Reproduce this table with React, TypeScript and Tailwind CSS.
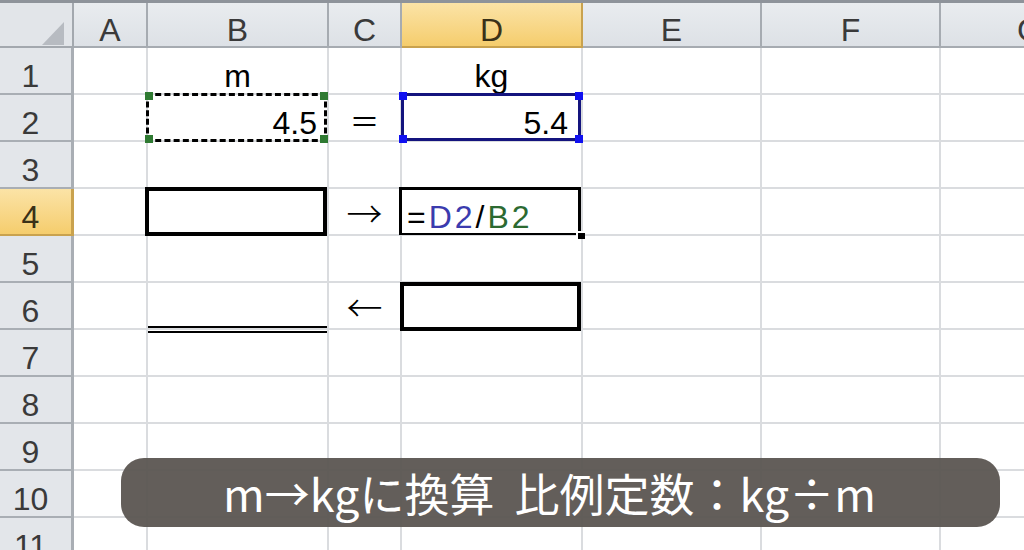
import React from 'react';

const cols = ['A', 'B', 'C', 'D', 'E', 'F', 'G'];
const rows = [1, 2, 3, 4, 5, 6, 7, 8, 9, 10, 11];

const cellFont = { fontFamily: '"Liberation Sans", "Noto Sans CJK JP", sans-serif' };
const jpFont = { fontFamily: '"Noto Sans CJK JP", "Liberation Sans", sans-serif' };

function Corner() {
  return (
    <div className="relative h-[45px] bg-[#e2e5e9] border-r-2 border-b-2 border-[#a3a8ae]">
      <svg className="absolute left-[42px] top-[19px]" width="22" height="23" viewBox="0 0 22 23">
        <polygon points="22,0 22,23 0,23" fill="#b7bbc1" />
      </svg>
    </div>
  );
}

function ColHeader({ label }: { label: string }) {
  const active = label === 'D';
  return (
    <div
      className={`h-[45px] flex items-end justify-center border-r-2 border-b-2 text-[32px] leading-none ${
        active
          ? 'bg-gradient-to-b from-[#fbe3a6] to-[#f5cd6c] border-[#c9a24e] text-[#3a3118]'
          : 'bg-gradient-to-b from-[#e9ecef] to-[#dde1e6] border-[#a6abb1] text-[#3a3a3a]'
      }`}
      style={cellFont}
    >
      {label}
    </div>
  );
}

function RowHeader({ n }: { n: number }) {
  const active = n === 4;
  return (
    <div
      className={`h-[47px] flex items-end justify-center pr-[10px] pb-[1px] border-r-[3px] border-b-2 text-[32px] leading-none ${
        active
          ? 'bg-gradient-to-b from-[#fbe3a6] to-[#f5cd6c] border-[#c9a24e] text-[#3a3118]'
          : 'bg-[#e3e6ea] border-[#a9aeb4] text-[#3a3a3a]'
      }`}
      style={cellFont}
    >
      {n}
    </div>
  );
}

function Handle({ pos, color }: { pos: string; color: string }) {
  return <div className={`absolute w-[8px] h-[8px] ${pos} ${color}`} />;
}

function Cell({ r, c }: { r: number; c: string }) {
  let content: React.ReactNode = null;
  let align = 'justify-start';
  let overlay: React.ReactNode = null;

  if (r === 1 && c === 'B') {
    content = 'm';
    align = 'justify-center';
  }
  if (r === 1 && c === 'D') {
    content = 'kg';
    align = 'justify-center';
  }
  if (r === 2 && c === 'B') {
    content = '4.5';
    align = 'justify-end pr-[10px]';
    overlay = (
      <div className="absolute z-10 -top-[2px] -left-[2px] right-0 -bottom-[2px]">
        <div className="absolute inset-0 border-[3px] border-dashed border-black" />
        <Handle pos="-top-[1px] -left-[1px]" color="bg-[#2f7a32]" />
        <Handle pos="-top-[1px] -right-[1px]" color="bg-[#2f7a32]" />
        <Handle pos="-bottom-[1px] -left-[1px]" color="bg-[#2f7a32]" />
        <Handle pos="-bottom-[1px] -right-[1px]" color="bg-[#2f7a32]" />
      </div>
    );
  }
  if (r === 2 && c === 'C') {
    content = (
      <span className="text-[30px] pb-[4px]" style={jpFont}>
        ＝
      </span>
    );
    align = 'justify-center';
  }
  if (r === 2 && c === 'D') {
    content = '5.4';
    align = 'justify-end pr-[13px]';
    overlay = (
      <div className="absolute z-10 -top-[2px] -left-[1px] right-0 -bottom-[1px]">
        <div className="absolute inset-0 border-[3px] border-[#14147e]" />
        <Handle pos="-top-[1px] -left-[2px]" color="bg-[#1010f0]" />
        <Handle pos="-top-[1px] -right-[2px]" color="bg-[#1010f0]" />
        <Handle pos="-bottom-[2px] -left-[2px]" color="bg-[#1010f0]" />
        <Handle pos="-bottom-[2px] -right-[2px]" color="bg-[#1010f0]" />
      </div>
    );
  }
  if (r === 4 && c === 'B') {
    overlay = <div className="absolute z-10 -top-[2px] -left-[3px] right-0 -bottom-[2px] border-4 border-black" />;
  }
  if (r === 4 && c === 'C') {
    content = (
      <span className="text-[36px] font-light pb-[3px]" style={jpFont}>
        →
      </span>
    );
    align = 'justify-center';
  }
  if (r === 4 && c === 'D') {
    content = (
      <span className="tracking-[3px]">
        <span>=</span>
        <span className="text-[#3b3bae]">D2</span>
        <span>/</span>
        <span className="text-[#2c6a31]">B2</span>
      </span>
    );
    align = 'justify-start pl-[5px] text-[30px]';
    overlay = (
      <div className="absolute z-10 -top-[2px] -left-[3px] right-0 -bottom-[1px]">
        <div className="absolute inset-0 border-x-[3px] border-t-[3px] border-b-2 border-black" />
        <div className="absolute -right-[4px] -bottom-[4px] w-[9px] h-[8px] bg-black border-l-2 border-t-2 border-white" />
      </div>
    );
  }
  if (r === 6 && c === 'B') {
    overlay = <div className="absolute z-10 left-0 right-0 -bottom-[5px] h-[7px] border-y-2 border-black" />;
  }
  if (r === 6 && c === 'C') {
    content = (
      <span className="text-[36px] font-light pb-[3px]" style={jpFont}>
        ←
      </span>
    );
    align = 'justify-center';
  }
  if (r === 6 && c === 'D') {
    overlay = <div className="absolute z-10 -top-[1px] -left-[2px] right-0 -bottom-[3px] border-4 border-black" />;
  }

  return (
    <div
      className={`relative h-[47px] flex items-end pb-[1px] border-r-2 border-b-2 border-[#dadcdf] bg-white text-[32px] leading-none text-black ${align}`}
      style={cellFont}
    >
      {content}
      {overlay}
    </div>
  );
}

export default function App() {
  return (
    <div className="relative w-[1024px] h-[550px] overflow-hidden bg-white border-t-[3px] border-[#8e939a]">
      <div className="grid w-max grid-cols-[74px_74px_181px_73px_181px_179px_179px_179px]">
        <Corner />
        {cols.map((c) => (
          <ColHeader key={c} label={c} />
        ))}
        {rows.map((r) => (
          <React.Fragment key={r}>
            <RowHeader n={r} />
            {cols.map((c) => (
              <Cell key={c} r={r} c={c} />
            ))}
          </React.Fragment>
        ))}
      </div>

      {/* caption overlay */}
      <div
        className="absolute z-20 left-[121px] top-[455px] w-[879px] h-[69px] rounded-[23px] bg-[#5b5551]/95 flex items-center justify-center gap-[20px] pr-[22px] text-white text-[45px] leading-none"
        style={jpFont}
      >
        <span>m→kgに換算</span>
        <span>比例定数：kg÷m</span>
      </div>
    </div>
  );
}
